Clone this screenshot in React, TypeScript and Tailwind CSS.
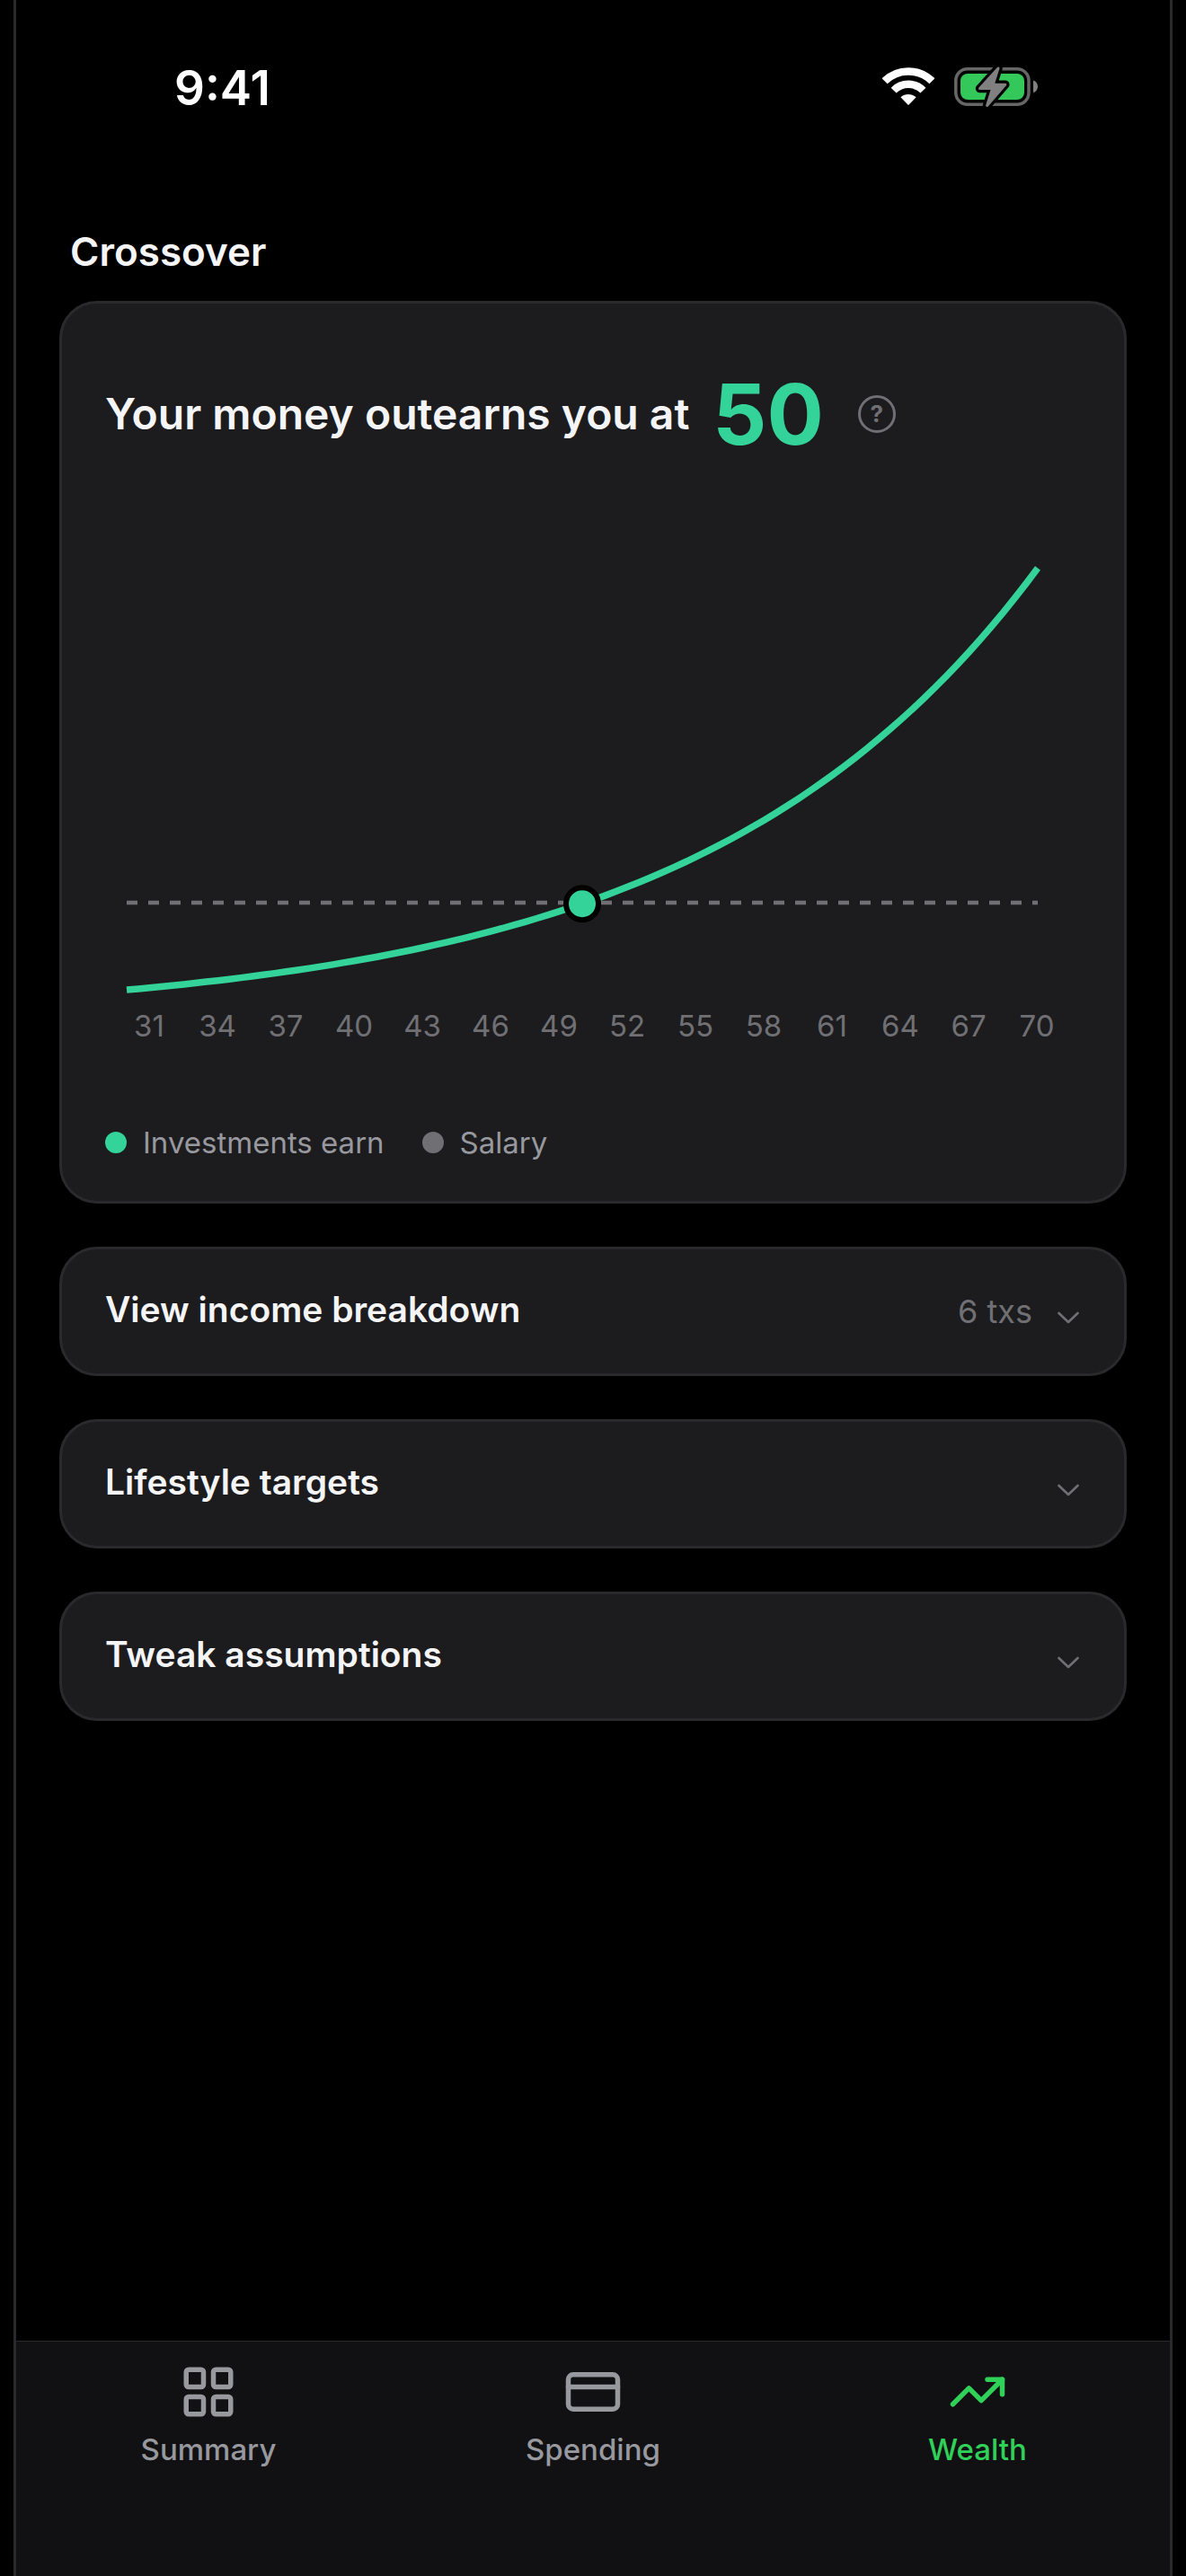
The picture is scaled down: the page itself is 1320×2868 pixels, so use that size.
import React, { useState } from "react";
import { CreditCard, LayoutGrid, TrendingUp } from "lucide-react";

const START_AGE = 30;
const END_AGE = 70;
const CROSSOVER_AGE = 50;

const CHART_WIDTH = 1014;
const CHART_HEIGHT = 490;
const SALARY_Y = 385;

const ageLabels = [31, 34, 37, 40, 43, 46, 49, 52, 55, 58, 61, 64, 67, 70];

const panels = [
  { id: "income", title: "View income breakdown", detail: "6 txs" },
  { id: "lifestyle", title: "Lifestyle targets", detail: "" },
  { id: "assumptions", title: "Tweak assumptions", detail: "" },
];

const tabs = [
  { id: "summary", label: "Summary", Icon: LayoutGrid },
  { id: "spending", label: "Spending", Icon: CreditCard },
  { id: "wealth", label: "Wealth", Icon: TrendingUp },
];

const xForAge = (age: number) =>
  ((age - START_AGE) / (END_AGE - START_AGE)) * CHART_WIDTH;

// compound growth of what the investments earn
const yForAge = (age: number) =>
  482 - 33.1 * (Math.exp(0.068 * (age - START_AGE)) - 1);

function WifiIcon() {
  return (
    <svg width="58" height="44" viewBox="0 0 58 44" fill="none" aria-hidden="true">
      <path d="M2.6 15.3A37.5 37.5 0 0 1 55.4 15.3" stroke="#fff" strokeWidth="8.6" />
      <path d="M12.6 25.6A23.2 23.2 0 0 1 45.4 25.6" stroke="#fff" strokeWidth="8.4" />
      <path d="M20.4 33.2A13 13 0 0 1 37.6 33.2L29.6 41.6Q29 42.2 28.4 41.6Z" fill="#fff" />
    </svg>
  );
}

function BatteryIcon() {
  const bolt = "M51 4L30.5 26.6H44.5L38.6 45.4L58.8 22.2H45.2Z";
  return (
    <svg width="96" height="50" viewBox="0 0 96 50" fill="none" aria-hidden="true">
      <rect x="3.8" y="4.7" width="81.2" height="39.6" rx="13" stroke="#666" strokeWidth="3.5" />
      <rect x="9" y="10" width="71" height="29" rx="8" fill="#34c759" />
      <path d="M90 17.5C93 18.4 95 21 95 24.3S93 30.4 90 31.3Z" fill="#808080" />
      <path d={bolt} stroke="#000" strokeWidth="9.5" strokeLinejoin="round" />
      <path d={bolt} fill="#808080" stroke="#808080" strokeWidth="3" strokeLinejoin="round" />
    </svg>
  );
}

function ChevronIcon() {
  return (
    <svg width="26" height="30" viewBox="0 0 26 30" fill="none" aria-hidden="true">
      <path
        d="M1.5 17L12 27L22.5 17"
        stroke="#707074"
        strokeWidth="2.6"
        strokeLinecap="round"
        strokeLinejoin="round"
      />
    </svg>
  );
}

function CrossoverChart() {
  const points: string[] = [];
  for (let age = START_AGE; age <= END_AGE; age += 0.5) {
    points.push(`${xForAge(age).toFixed(1)} ${yForAge(age).toFixed(1)}`);
  }

  return (
    <svg
      className="block w-full overflow-visible"
      viewBox={`0 0 ${CHART_WIDTH} ${CHART_HEIGHT}`}
      fill="none"
      role="img"
      aria-label="Investment earnings and salary by age"
    >
      <line
        x1="0"
        x2={CHART_WIDTH}
        y1={SALARY_Y}
        y2={SALARY_Y}
        stroke="#707074"
        strokeWidth="4.5"
        strokeDasharray="12 12"
      />
      <path d={`M${points.join("L")}`} stroke="#34d399" strokeWidth="7.5" />
      <circle
        cx={xForAge(CROSSOVER_AGE)}
        cy={yForAge(CROSSOVER_AGE)}
        r="18"
        fill="#34d399"
        stroke="#000"
        strokeWidth="6"
      />
    </svg>
  );
}

export default function App() {
  const [activeTab, setActiveTab] = useState("wealth");
  const [openPanel, setOpenPanel] = useState("");

  return (
    <div className="min-h-screen bg-black px-[15px] font-['Inter',sans-serif] text-[#f5f5f7]">
      <div className="flex min-h-screen flex-col border-x-[3px] border-[#2a2a2c]">
        {/* Status bar */}
        <header className="flex h-[196px] items-center justify-between pl-[176px] pr-[146px]">
          <span className="text-[53px] font-semibold leading-[60px] text-white">9:41</span>
          <div className="flex items-center gap-[20px] pb-[2px]">
            <WifiIcon />
            <BatteryIcon />
          </div>
        </header>

        <main className="flex-1 px-[48px] pt-[56px]">
          <h1 className="mb-[27px] pl-[12px] text-[44px] font-semibold leading-[56px]">
            Crossover
          </h1>

          {/* Crossover card */}
          <section className="mb-[48px] rounded-[42px] border-[3px] border-[#2a2a2c] bg-[#1c1c1e] pb-[45px] pt-[75px]">
            <div className="flex items-center px-[48px] leading-[96px]">
              <h2 className="text-[48px] font-semibold">Your money outearns you at</h2>
              <span className="ml-[26px] text-[94px] font-bold text-[#34d399]">50</span>
              <button
                type="button"
                aria-label="How is this calculated?"
                className="ml-[38px] flex size-[42px] items-center justify-center rounded-full border-[3px] border-[#707074] text-[26px] font-bold leading-none text-[#707074]"
              >
                ?
              </button>
            </div>

            <div className="mt-[111px] pl-[72px] pr-[96px]">
              <CrossoverChart />
            </div>
            <div className="mt-[12px] grid grid-cols-14 px-[59px] text-center text-[33px] leading-[40px] text-[#707074]">
              {ageLabels.map((age) => (
                <span key={age}>{age}</span>
              ))}
            </div>

            <div className="mt-[90px] flex gap-[42px] px-[48px] text-[33px] leading-[40px] text-[#98989f]">
              <div className="flex items-center gap-[18px]">
                <span className="size-[24px] rounded-full bg-[#34d399]" />
                Investments earn
              </div>
              <div className="flex items-center gap-[18px]">
                <span className="size-[24px] rounded-full bg-[#707074]" />
                Salary
              </div>
            </div>
          </section>

          <div className="flex flex-col gap-[48px]">
            {panels.map((panel) => (
              <button
                key={panel.id}
                type="button"
                aria-expanded={openPanel === panel.id}
                onClick={() => setOpenPanel(openPanel === panel.id ? "" : panel.id)}
                className="flex h-[144px] w-full items-center justify-between rounded-[42px] border-[3px] border-[#2a2a2c] bg-[#1c1c1e] px-[48px]"
              >
                <span className="pb-[4px] text-[39px] font-semibold">{panel.title}</span>
                <span className="flex items-center gap-[28px] text-[36px] leading-[40px] text-[#707074]">
                  {panel.detail}
                  <ChevronIcon />
                </span>
              </button>
            ))}
          </div>
        </main>

        {/* Tab bar */}
        <nav className="grid grid-cols-3 border-t border-[#2a2a2c] bg-[#111113] pb-[121px] pt-[23px]">
          {tabs.map(({ id, label, Icon }) => (
            <button
              key={id}
              type="button"
              aria-current={activeTab === id ? "page" : undefined}
              onClick={() => setActiveTab(id)}
              className={`flex flex-col items-center gap-[11px] text-[33px] font-medium leading-[40px] ${
                activeTab === id ? "text-[#30d158]" : "text-[#98989f]"
              }`}
            >
              <Icon size={66} />
              {label}
            </button>
          ))}
        </nav>
      </div>
    </div>
  );
}
